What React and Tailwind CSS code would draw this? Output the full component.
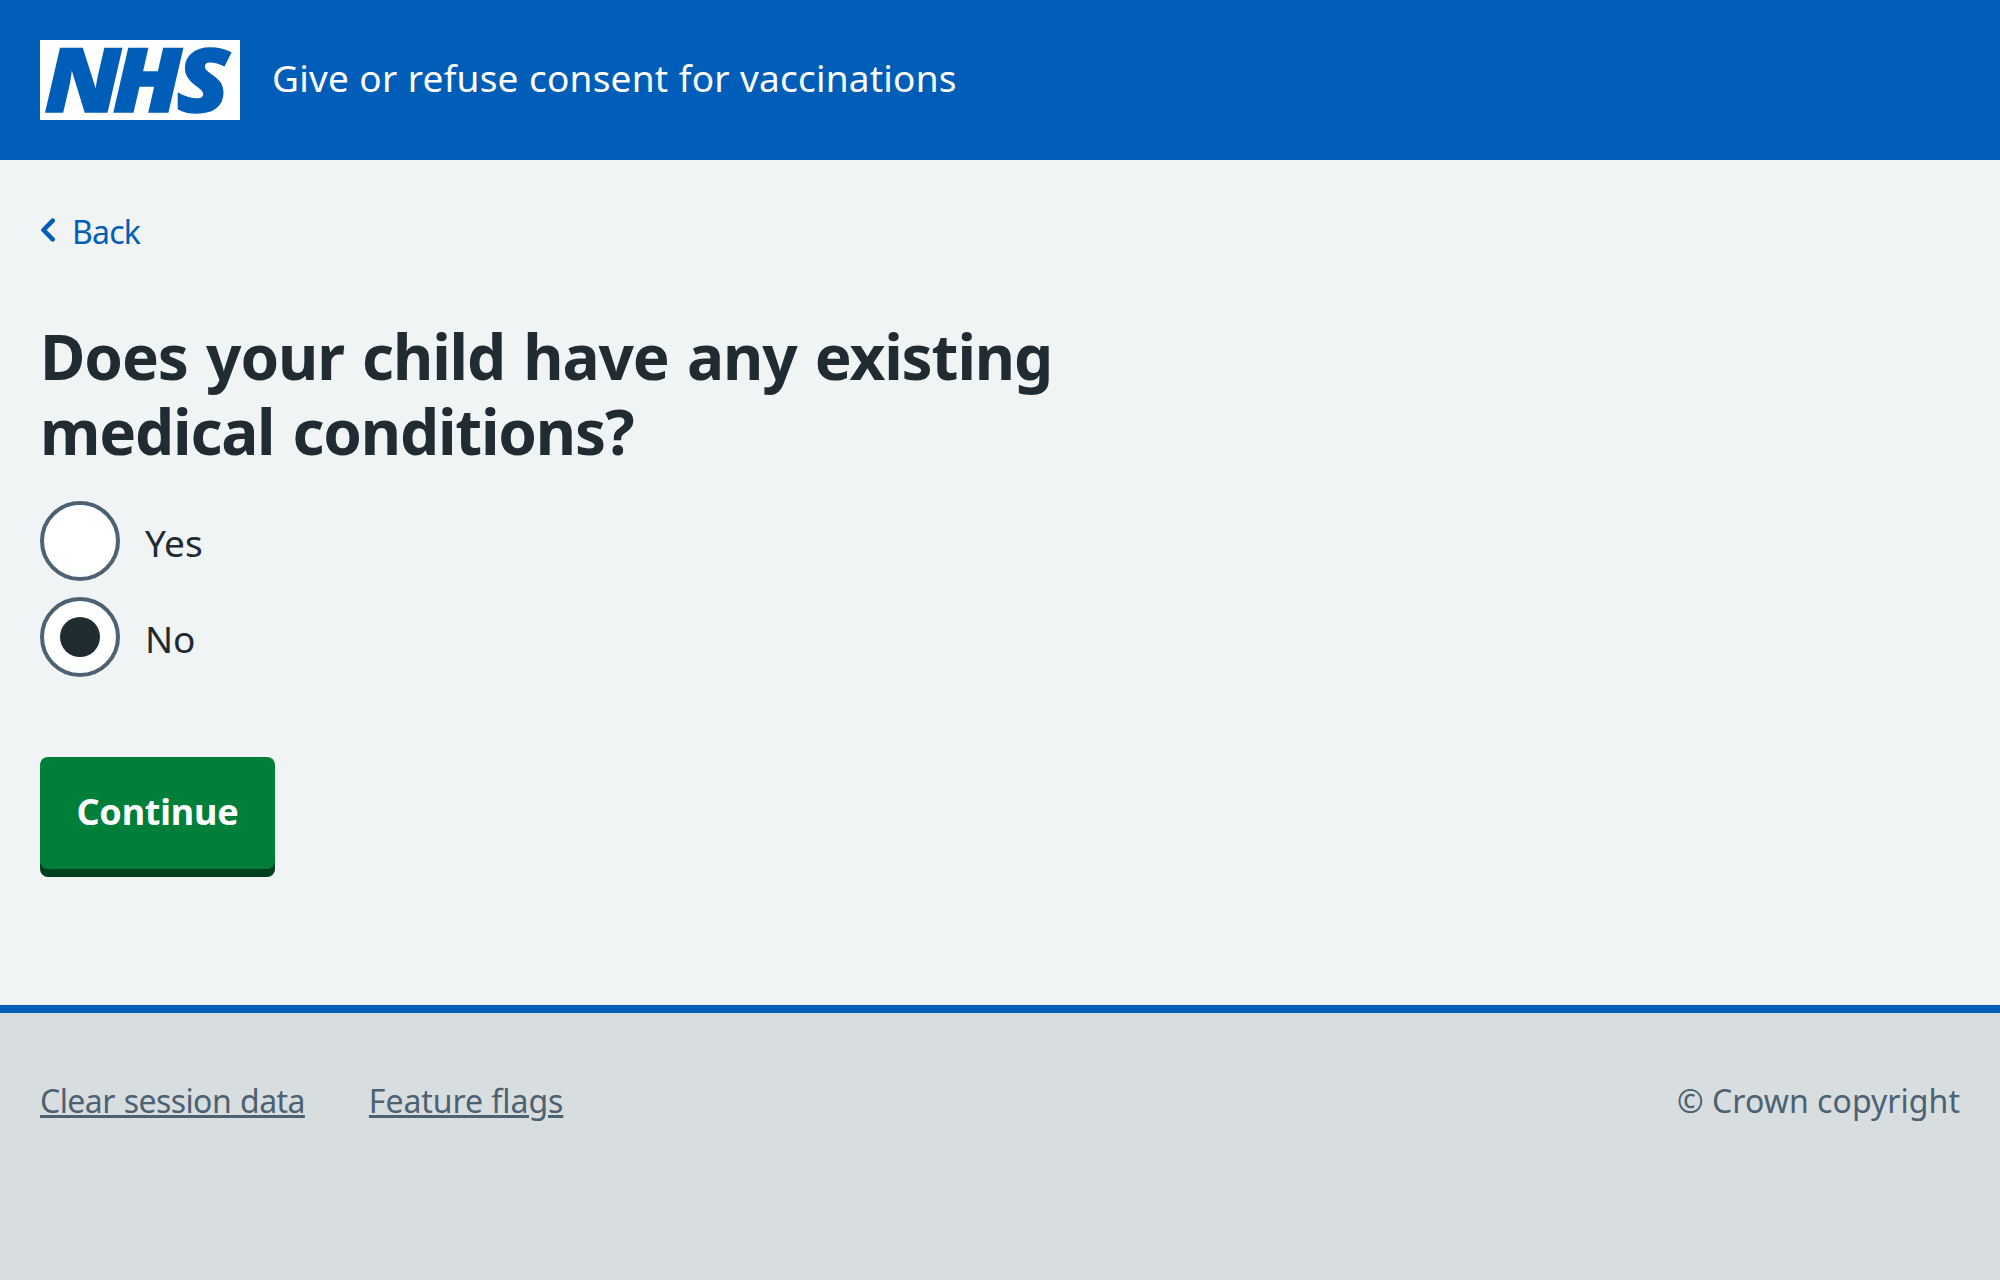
function Logo() {
  return (
    <svg className="block h-20 w-50 bg-white" viewBox="0 0 200 80" role="img" aria-label="NHS">
      <text
        x="4.2 66.2 124"
        y="71.5"
        transform="scale(1.1 1)"
        fill="#005eb8"
        stroke="#005eb8"
        strokeWidth="1.5"
        fontFamily="'Open Sans', 'Noto Sans', sans-serif"
        fontSize="88"
        fontWeight="800"
        fontStyle="italic"
      >
        NHS
      </text>
    </svg>
  );
}

function Radio({ label, checked }) {
  return (
    <label className="flex h-20 items-start">
      <span className="flex size-20 shrink-0 items-center justify-center rounded-full border-4 border-[#4c6272] bg-white">
        {checked && <span className="size-10 rounded-full bg-[#212b32]" />}
      </span>
      <span className="mt-[14px] ml-[25px] text-[37px] leading-14">{label}</span>
    </label>
  );
}

export default function App() {
  return (
    <div className="flex h-[1280px] w-full flex-col overflow-hidden bg-[#f0f4f5] font-['Noto_Sans',sans-serif] text-[#212b32]">
      <header className="flex h-40 shrink-0 items-center bg-[#005eb8] px-10 text-white">
        <Logo />
        <span className="mb-1 ml-8 text-[37px] leading-14 tracking-[0.2px] whitespace-nowrap [word-spacing:0.6px]">
          Give or refuse consent for vaccinations
        </span>
      </header>

      <main className="flex h-[845px] shrink-0 flex-col items-start px-10">
        <a className="mt-[51px] flex h-10 items-center text-[32px] leading-10 text-[#005eb8]">
          <svg className="mb-[2px] h-6 w-4" viewBox="0 0 16 24" fill="none" stroke="currentColor" strokeWidth="4.6" strokeLinecap="round" strokeLinejoin="round">
            <path d="M12.700 2.600 3.500 12l9.200 9.400" />
          </svg>
          <span className="mt-[2px] ml-4 tracking-[-0.8px]">Back</span>
        </a>
        <h1 className="mt-[68px] text-[62px] leading-[75px] font-bold tracking-[-1.1px] whitespace-nowrap [word-spacing:3.2px]">
          Does your child have any existing
          <br />
          <span className="tracking-[-1.2px]">medical conditions?</span>
        </h1>
        <div className="mt-8 flex flex-col gap-4">
          <Radio label="Yes" />
          <Radio label="No" checked />
        </div>
        <button className="mt-20 h-28 w-[235px] rounded-lg bg-[#007f3b] pb-[2px] text-[36px] leading-14 font-bold tracking-[-0.2px] text-white shadow-[0_8px_0_0_#00401e]">
          Continue
        </button>
      </main>

      <footer className="flex flex-1 items-start border-t-8 border-[#005eb8] bg-[#d8dde0] px-10 pt-16 text-[32px] leading-12 text-[#4c6272]">
        <a className="tracking-[-0.58px] underline decoration-[3px] underline-offset-[2px] [word-spacing:1.2px]">Clear session data</a>
        <a className="ml-16 tracking-[-0.05px] underline decoration-[3px] underline-offset-[2px]">Feature flags</a>
        <span className="ml-auto tracking-[0.04px]">© Crown copyright</span>
      </footer>
    </div>
  );
}
